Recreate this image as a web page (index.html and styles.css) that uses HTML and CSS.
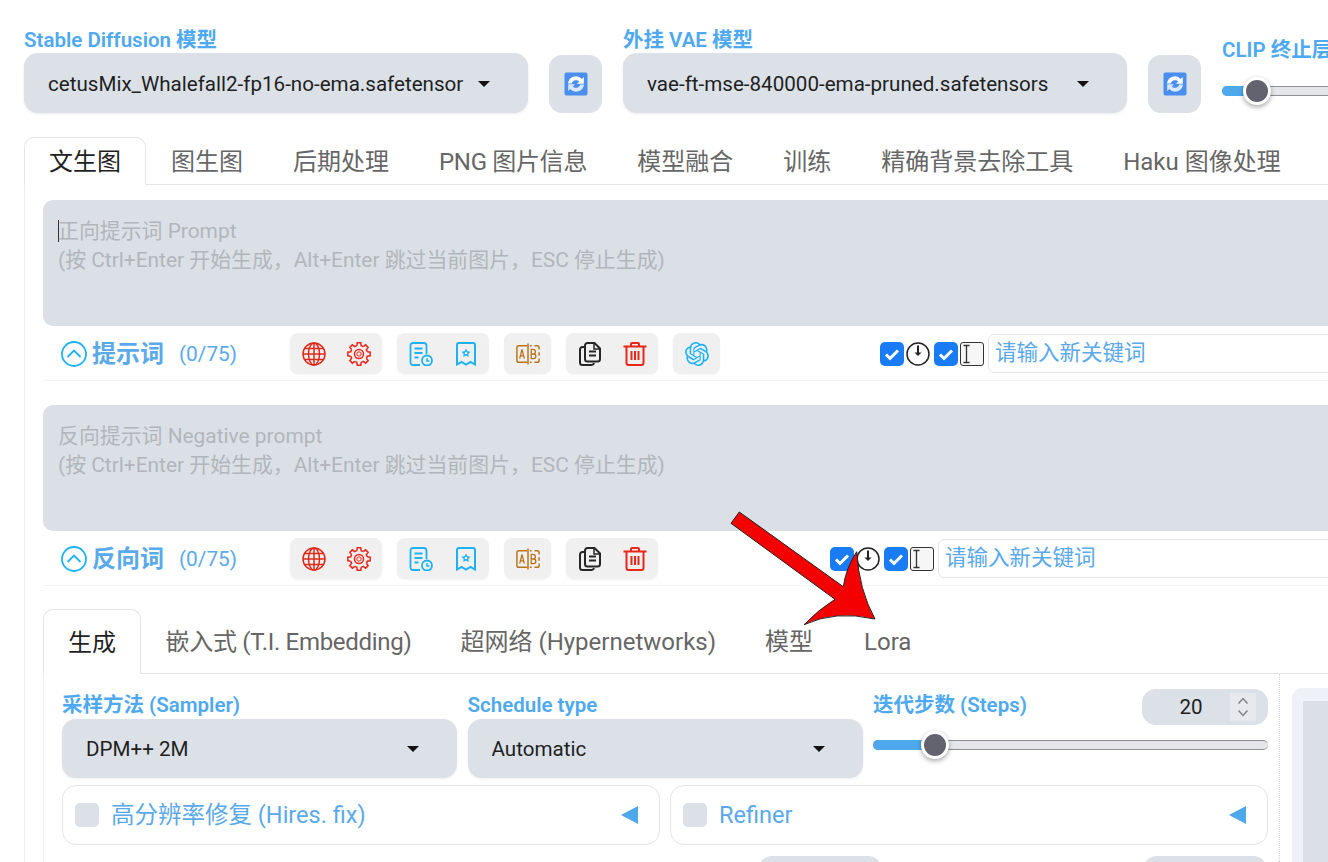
FILE: index.html
```html
<!DOCTYPE html>
<html lang="zh-CN">
<head>
  <meta charset="UTF-8">
  <title>Stable Diffusion</title>
  <link rel="stylesheet" href="styles.css">
</head>
<body>

  <svg class="sprite">
    <symbol id="i-refresh" viewBox="0 0 24 24">
      <rect x="0.500" y="0.500" width="23" height="23" rx="2" fill="#4a8ff0"/>
      <path d="M4 11.500a8 8 0 0 1 13.800-4.600l2-2v6.800H13l2.300-2.300a4.600 4.600 0 0 0-7.600 2.100z" fill="#fff"/>
      <path d="M20 12.500a8 8 0 0 1-13.800 4.600l-2 2v-6.800H11l-2.300 2.300a4.600 4.600 0 0 0 7.600-2.100z" fill="#dbe8fb"/>
    </symbol>
    <symbol id="i-globe" viewBox="0 0 24 24" fill="none" stroke="#dd2a1b" stroke-width="1.500">
      <circle cx="12" cy="12" r="11"/>
      <ellipse cx="12" cy="12" rx="5.500" ry="11"/>
      <path d="M12 1v22M1 12h22M2.800 6.500h18.400M2.800 17.500h18.400"/>
    </symbol>
    <symbol id="i-gear" viewBox="-12 -12 24 24" fill="none" stroke="#e8261a" stroke-width="1.500">
      <path id="tooth" d="M-2.200 -8.200L-1.770 -11.160H1.770L2.200 -8.200A8.500 8.500 0 0 1 4.250 -7.360"/>
      <use href="#tooth" transform="rotate(45)"/>
      <use href="#tooth" transform="rotate(90)"/>
      <use href="#tooth" transform="rotate(135)"/>
      <use href="#tooth" transform="rotate(180)"/>
      <use href="#tooth" transform="rotate(225)"/>
      <use href="#tooth" transform="rotate(270)"/>
      <use href="#tooth" transform="rotate(315)"/>
      <circle r="4.500"/>
      <circle r="2.200" stroke-width="1"/>
    </symbol>
    <symbol id="i-history" viewBox="0 0 24 24" fill="none" stroke="#1cb2f5" stroke-width="1.800">
      <path d="M11 23H4a2.500 2.500 0 0 1-2.500-2.500V3.500A2.500 2.500 0 0 1 4 1h11a2.500 2.500 0 0 1 2.500 2.500V12"/>
      <path d="M5.500 6.500h8M5.500 11h8M5.500 15.500h4" stroke-width="2"/>
      <circle cx="18" cy="18.500" r="5"/>
      <path d="M18 16v3h2.500" stroke-width="1.500"/>
    </symbol>
    <symbol id="i-bookmark" viewBox="0 0 24 24" fill="none" stroke="#1cb2f5" stroke-width="2">
      <path d="M3 3a2 2 0 0 1 2-2h14a2 2 0 0 1 2 2v19.500l-4.500-2.500-4.500 2.500-4.500-2.500L3 22.500z"/>
      <path d="M12 6.500l1.500 2.800 3 .5-2.200 2.200.5 3-2.800-1.400-2.800 1.400.5-3-2.200-2.200 3-.5z" fill="#1cb2f5" stroke="none"/>
      <circle cx="12" cy="11" r="1.300" fill="#f0f0f0" stroke="none"/>
    </symbol>
    <symbol id="i-ab" viewBox="0 0 26 24" fill="none" stroke="#b8741a" stroke-width="1.600">
      <path d="M12 3H3a2 2 0 0 0-2 2v14a2 2 0 0 0 2 2h9M13 0.500v23"/>
      <path d="M15 3h2M20 3h3a2 2 0 0 1 2 2v2M25 10v4M25 17v2a2 2 0 0 1-2 2h-3M17 21h-2"/>
      <path d="M4 17l2.500-10 2.500 10M5 14h3" stroke-width="1.400"/>
      <path d="M16.500 7v10h2.500a2.500 2.500 0 0 0 0-5h-2.500h2a2.500 2.500 0 0 0 0-5z" stroke-width="1.400"/>
    </symbol>
    <symbol id="i-copy" viewBox="0 0 24 24" fill="none" stroke="#262626" stroke-width="2">
      <path d="M7 5H4.500A2.500 2.500 0 0 0 2 7.500v13A2.500 2.500 0 0 0 4.500 23h9a2.500 2.500 0 0 0 2.500-2"/>
      <path d="M9.500 1h7L22 6.500V17a2.500 2.500 0 0 1-2.500 2.500h-10A2.500 2.500 0 0 1 7 17V3.500A2.500 2.500 0 0 1 9.500 1z"/>
      <path d="M11 9.500h7M11 13.500h7"/>
      <path d="M16 1v6h6" stroke-width="1.500"/>
    </symbol>
    <symbol id="i-trash" viewBox="0 0 24 24" fill="none" stroke="#e8261a" stroke-width="2">
      <path d="M0.500 4.500h23M8 4.500V2a1 1 0 0 1 1-1h6a1 1 0 0 1 1 1v2.500"/>
      <path d="M3.500 4.500V21a2 2 0 0 0 2 2h13a2 2 0 0 0 2-2V4.500"/>
      <path d="M8.500 9v9M12 9v9M15.500 9v9"/>
    </symbol>
    <symbol id="i-openai" viewBox="0 0 24 24">
      <path fill="#1cb2f5" d="M22.2819 9.8211a5.9847 5.9847 0 0 0-.5157-4.9108 6.0462 6.0462 0 0 0-6.5098-2.9A6.0651 6.0651 0 0 0 4.9807 4.1818a5.9847 5.9847 0 0 0-3.9977 2.9 6.0462 6.0462 0 0 0 .7427 7.0966 5.98 5.98 0 0 0 .511 4.9107 6.051 6.051 0 0 0 6.5146 2.9001A5.9847 5.9847 0 0 0 13.2599 24a6.0557 6.0557 0 0 0 5.7718-4.2058 5.9894 5.9894 0 0 0 3.9977-2.9001 6.0557 6.0557 0 0 0-.7475-7.0729zm-9.022 12.6081a4.4755 4.4755 0 0 1-2.8764-1.0408l.1419-.0804 4.7783-2.7582a.7948.7948 0 0 0 .3927-.6813v-6.7369l2.02 1.1686a.071.071 0 0 1 .038.052v5.5826a4.504 4.504 0 0 1-4.4945 4.4944zm-9.6607-4.1254a4.4708 4.4708 0 0 1-.5346-3.0137l.142.0852 4.783 2.7582a.7712.7712 0 0 0 .7806 0l5.8428-3.3685v2.3324a.0804.0804 0 0 1-.0332.0615L9.74 19.9502a4.4992 4.4992 0 0 1-6.1408-1.6464zM2.3408 7.8956a4.485 4.485 0 0 1 2.3655-1.9728V11.6a.7664.7664 0 0 0 .3879.6765l5.8144 3.3543-2.0201 1.1685a.0757.0757 0 0 1-.071 0l-4.8303-2.7865A4.504 4.504 0 0 1 2.3408 7.872zm16.5963 3.8558L13.1038 8.364 15.1192 7.2a.0757.0757 0 0 1 .071 0l4.8303 2.7913a4.4944 4.4944 0 0 1-.6765 8.1042v-5.6772a.79.79 0 0 0-.407-.667zm2.0107-3.0231l-.142-.0852-4.7735-2.7818a.7759.7759 0 0 0-.7854 0L9.409 9.2297V6.8974a.0662.0662 0 0 1 .0284-.0615l4.8303-2.7866a4.4992 4.4992 0 0 1 6.6802 4.66zM8.3065 12.863l-2.02-1.1638a.0804.0804 0 0 1-.038-.0567V6.0742a4.4992 4.4992 0 0 1 7.3757-3.4537l-.142.0805L8.704 5.459a.7948.7948 0 0 0-.3927.6813zm1.0976-2.3654l2.602-1.4998 2.6069 1.4998v2.9994l-2.5974 1.4997-2.6067-1.4997Z"/>
    </symbol>
    <symbol id="i-check" viewBox="0 0 24 24">
      <rect width="24" height="24" rx="5" fill="#1a7cf5"/>
      <path d="M6 12.500l4 4 8-8" fill="none" stroke="#fff" stroke-width="3"/>
    </symbol>
    <symbol id="i-clock" viewBox="0 0 24 24" fill="none" stroke="#222" stroke-width="1.500">
      <circle cx="12" cy="12" r="11"/>
      <path d="M12 3.500v9.500" stroke-width="2"/>
      <path d="M8.500 10.500l3.500 3.500 3.500-3.500z" fill="#222" stroke="none"/>
    </symbol>
    <symbol id="i-ibeam" viewBox="0 0 24 24">
      <rect x="0.500" y="0.500" width="23" height="23" rx="2.500" fill="#f6f6f6" stroke="#333"/>
      <path d="M3.500 3.500h6M6.500 3.500v17M3.500 20.500h6" fill="none" stroke="#333" stroke-width="1.300"/>
    </symbol>
  </svg>

  <div class="page">

    <div class="model-row">
      <div class="model-col">
        <label class="field-label">Stable Diffusion 模型</label>
        <div class="select select-model">
          <span class="select-text">cetusMix_Whalefall2-fp16-no-ema.safetensors</span>
          <span class="caret"></span>
        </div>
      </div>
      <button class="refresh-btn"><svg class="icon-refresh"><use href="#i-refresh"/></svg></button>
      <div class="model-col">
        <label class="field-label">外挂 VAE 模型</label>
        <div class="select select-model">
          <span class="select-text">vae-ft-mse-840000-ema-pruned.safetensors</span>
          <span class="caret"></span>
        </div>
      </div>
      <button class="refresh-btn"><svg class="icon-refresh"><use href="#i-refresh"/></svg></button>
      <div class="clip-col">
        <label class="field-label clip-label">CLIP 终止层数</label>
        <div class="slider clip-slider">
          <div class="slider-fill clip-fill"></div>
          <div class="slider-thumb clip-thumb"></div>
        </div>
      </div>
    </div>

    <div class="tabs main-tabs">
      <div class="tab active">文生图</div>
      <div class="tab">图生图</div>
      <div class="tab">后期处理</div>
      <div class="tab tab-tight">PNG 图片信息</div>
      <div class="tab">模型融合</div>
      <div class="tab">训练</div>
      <div class="tab">精确背景去除工具</div>
      <div class="tab">Haku 图像处理</div>
    </div>

    <div class="main-panel">

      <div class="prompt-box"><span class="text-cursor"></span>正向提示词 Prompt<br>(按 Ctrl+Enter 开始生成，Alt+Enter 跳过当前图片，ESC 停止生成)</div>
      <div class="toolbar">
        <svg class="chevron" viewBox="0 0 26 26"><circle cx="13" cy="13" r="12"/><path d="M6.500 16l6.500-6.500 6.500 6.500"/></svg>
        <span class="toolbar-title">提示词</span>
        <span class="token-count">(0/75)</span>
        <div class="tool-group"><svg class="tool-icon"><use href="#i-globe"/></svg><svg class="tool-icon"><use href="#i-gear"/></svg></div>
        <div class="tool-group"><svg class="tool-icon"><use href="#i-history"/></svg><svg class="tool-icon"><use href="#i-bookmark"/></svg></div>
        <div class="tool-group"><svg class="tool-icon"><use href="#i-ab"/></svg></div>
        <div class="tool-group"><svg class="tool-icon"><use href="#i-copy"/></svg><svg class="tool-icon"><use href="#i-trash"/></svg></div>
        <div class="tool-group"><svg class="tool-icon"><use href="#i-openai"/></svg></div>
        <div class="keyword keyword-pos">
          <svg class="kw-icon"><use href="#i-check"/></svg>
          <svg class="kw-icon"><use href="#i-clock"/></svg>
          <svg class="kw-icon kw-gap"><use href="#i-check"/></svg>
          <svg class="kw-icon"><use href="#i-ibeam"/></svg>
          <div class="kw-input">请输入新关键词</div>
        </div>
      </div>

      <div class="prompt-box prompt-neg">反向提示词 Negative prompt<br>(按 Ctrl+Enter 开始生成，Alt+Enter 跳过当前图片，ESC 停止生成)</div>
      <div class="toolbar">
        <svg class="chevron" viewBox="0 0 26 26"><circle cx="13" cy="13" r="12"/><path d="M6.500 16l6.500-6.500 6.500 6.500"/></svg>
        <span class="toolbar-title">反向词</span>
        <span class="token-count">(0/75)</span>
        <div class="tool-group"><svg class="tool-icon"><use href="#i-globe"/></svg><svg class="tool-icon"><use href="#i-gear"/></svg></div>
        <div class="tool-group"><svg class="tool-icon"><use href="#i-history"/></svg><svg class="tool-icon"><use href="#i-bookmark"/></svg></div>
        <div class="tool-group"><svg class="tool-icon"><use href="#i-ab"/></svg></div>
        <div class="tool-group"><svg class="tool-icon"><use href="#i-copy"/></svg><svg class="tool-icon"><use href="#i-trash"/></svg></div>
        <div class="keyword keyword-neg">
          <svg class="kw-icon"><use href="#i-check"/></svg>
          <svg class="kw-icon"><use href="#i-clock"/></svg>
          <svg class="kw-icon kw-gap"><use href="#i-check"/></svg>
          <svg class="kw-icon"><use href="#i-ibeam"/></svg>
          <div class="kw-input">请输入新关键词</div>
        </div>
      </div>

      <div class="tabs sub-tabs">
        <div class="tab active">生成</div>
        <div class="tab tab-tight">嵌入式 (T.I. Embedding)</div>
        <div class="tab">超网络 (Hypernetworks)</div>
        <div class="tab">模型</div>
        <div class="tab">Lora</div>
      </div>

      <div class="sub-panel">
        <div class="settings">
          <div class="settings-row">
            <div class="setting">
              <label class="field-label setting-label">采样方法 (Sampler)</label>
              <div class="select select-small"><span class="select-text">DPM++ 2M</span><span class="caret"></span></div>
            </div>
            <div class="setting">
              <label class="field-label setting-label">Schedule type</label>
              <div class="select select-small"><span class="select-text">Automatic</span><span class="caret"></span></div>
            </div>
            <div class="setting">
              <div class="steps-head">
                <label class="field-label steps-label">迭代步数 (Steps)</label>
                <div class="number-box">
                  <span class="number-value">20</span>
                  <span class="spinner">
                    <svg viewBox="0 0 12 8"><path d="M1.500 6.500L6 1.500l4.500 5"/></svg>
                    <svg viewBox="0 0 12 8"><path d="M1.500 1.500L6 6.500l4.500-5"/></svg>
                  </span>
                </div>
              </div>
              <div class="slider steps-slider">
                <div class="slider-fill steps-fill"></div>
                <div class="slider-thumb steps-thumb"></div>
              </div>
            </div>
          </div>

          <div class="accordion-row">
            <div class="accordion">
              <span class="box"></span>
              <span class="accordion-title">高分辨率修复 (Hires. fix)</span>
              <span class="fold-arrow"></span>
            </div>
            <div class="accordion">
              <span class="box"></span>
              <span class="accordion-title">Refiner</span>
              <span class="fold-arrow"></span>
            </div>
          </div>

          <div class="size-row">
            <label class="field-label size-label">宽度</label>
            <div class="number-box size-box"></div>
            <label class="field-label size-label-right">总批次数</label>
            <div class="number-box size-box"></div>
          </div>
        </div>

        <div class="preview"><div class="preview-inner"></div></div>
      </div>
    </div>
  </div>

  <!-- the red annotation arrow drawn over the screenshot -->
  <svg class="annotation" viewBox="0 0 1328 862">
    <path d="M739.300 512L843.300 586.700Q846 568 856.700 551.700Q859 590 875 619Q835 610 804 624.700Q818 610 835 599.300L731 523.300Z" fill="#f50000" stroke="#222" stroke-width="1"/>
  </svg>

</body>
</html>
```

FILE: styles.css
```css
* {
  box-sizing: border-box;
}

html, body {
  margin: 0;
  height: 862px;
  overflow: hidden;
  background: #fff;
}

body {
  position: relative;
  font-family: Roboto, "Noto Sans CJK SC", sans-serif;
  color: #1f1f1f;
}

.sprite {
  display: none;
}

.page {
  width: 1700px;
  padding: 27px 0 0 24px;
}

/* top row with the model pickers */
.model-row {
  display: flex;
  align-items: flex-start;
}

.model-col {
  width: 504px;
}

.field-label {
  display: block;
  color: #4ea9f0;
  font-size: 20.500px;
  font-weight: 600;
  line-height: 26px;
  white-space: nowrap;
}

.select {
  display: flex;
  align-items: center;
  background: #dbe1e7;
  border-radius: 14px;
  box-shadow: 0 1px 3px rgba(0, 0, 0, 0.08);
  font-size: 20.600px;
  line-height: 28px;
}

.select-model {
  height: 60px;
  padding: 1px 38px 0 24px;
}

.select-small {
  height: 59px;
  padding: 0 38px 0 24px;
}

.select-text {
  flex: 1;
  overflow: hidden;
  white-space: nowrap;
}

.caret {
  flex: none;
  margin-left: 14px;
  border-top: 6px solid #111;
  border-left: 6.500px solid transparent;
  border-right: 6.500px solid transparent;
}

.refresh-btn {
  display: flex;
  align-items: center;
  justify-content: center;
  width: 53px;
  height: 58px;
  margin: 28px 21px 0;
  padding: 0;
  border: 0;
  border-radius: 13px;
  background: #dbe1e7;
}

.icon-refresh {
  width: 24px;
  height: 24px;
}

.clip-col {
  width: 300px;
}

.clip-label {
  margin-top: 10px;
}

/* sliders */
.slider {
  position: relative;
  height: 10px;
  border: 1px solid #8d8f96;
  border-width: 1px 0;
  border-radius: 5px;
  background: #e5e6ea;
}

.slider-fill {
  position: absolute;
  top: -1px;
  left: 0;
  height: 10px;
  background: #4ea9ec;
  border-radius: 5px 0 0 5px;
}

.slider-thumb {
  position: absolute;
  top: -10px;
  width: 28px;
  height: 28px;
  border: 3px solid #fff;
  border-radius: 50%;
  background: #62636f;
  box-shadow: 0 2px 5px rgba(0, 0, 0, 0.35);
}

.clip-slider {
  margin-top: 23px;
}

.clip-fill {
  width: 30px;
}

.clip-thumb {
  left: 21px;
}

.steps-slider {
  margin-top: 15px;
}

.steps-fill {
  width: 56px;
}

.steps-thumb {
  left: 48px;
}

/* tabs */
.tabs {
  display: flex;
  border-bottom: 1px solid #e3e5e8;
}

.main-tabs {
  height: 48px;
  margin-top: 24px;
}

.sub-tabs {
  height: 65px;
  margin-top: 23px;
  align-items: stretch;
}

.tab {
  display: flex;
  align-items: center;
  height: 100%;
  padding: 2px 25px 0;
  color: #666;
  font-size: 24px;
  line-height: 34px;
  white-space: nowrap;
}

.sub-tabs .tab {
  padding-left: 24.500px;
  padding-right: 24.500px;
}

.sub-tabs .tab:last-child {
  padding-left: 26.500px;
}

.tab-tight {
  letter-spacing: -0.300px;
}

.tab.active {
  height: calc(100% + 1px);
  border: 1px solid #e3e5e8;
  border-bottom: 0;
  border-radius: 10px 10px 0 0;
  background: #fff;
  color: #1f1f1f;
  padding: 1px 24px 0;
}

.main-panel {
  border-left: 1px solid #eceef0;
  padding: 15px 0 0 18px;
}

/* prompt boxes */
.prompt-box {
  height: 126px;
  padding: 17px 15px;
  background: #dae0e6;
  border-radius: 10px 0 0 10px;
  color: #b2b6bc;
  font-size: 20.900px;
  line-height: 29px;
  white-space: nowrap;
}

.text-cursor {
  display: inline-block;
  width: 1px;
  height: 22px;
  margin-right: -1px;
  background: #333;
  vertical-align: -4px;
}

.prompt-neg {
  margin-top: 24px;
}

.toolbar {
  display: flex;
  align-items: flex-start;
  height: 55px;
  padding: 7px 0 0 18px;
  border-bottom: 1px solid #f2f3f5;
}

.chevron {
  flex: none;
  width: 26px;
  height: 26px;
  margin-top: 8px;
  fill: none;
  stroke: #1cb2f5;
  stroke-width: 1.800;
}

.toolbar-title {
  flex: none;
  width: 71px;
  margin-left: 5px;
  color: #5aa9ea;
  font-size: 24px;
  font-weight: 700;
  line-height: 43px;
  white-space: nowrap;
}

.token-count {
  flex: none;
  width: 111px;
  margin-left: 16px;
  color: #5aa9ea;
  font-size: 20.800px;
  line-height: 43px;
}

.tool-group {
  display: flex;
  align-items: center;
  gap: 21px;
  height: 41px;
  margin-right: 15px;
  padding: 0 11.500px;
  background: #f0f0f0;
  border-radius: 8px;
  box-shadow: 0 1px 2px rgba(0, 0, 0, 0.05);
}

.tool-icon {
  flex: none;
  width: 24px;
  height: 24px;
}

.keyword {
  display: flex;
  align-items: center;
  height: 41px;
}

.keyword-pos {
  margin-left: 145px;
}

.keyword-neg {
  margin-left: 157px;
}

.kw-icon {
  flex: none;
  width: 24px;
  height: 24px;
  margin-right: 2px;
}

.kw-icon.kw-gap {
  margin-left: 2px;
}

.kw-input {
  width: 500px;
  height: 39px;
  margin-left: 2px;
  padding-left: 6px;
  border: 1px solid #e3e6ea;
  border-radius: 6px;
  color: #5aa9ea;
  font-size: 21.500px;
  line-height: 35px;
}

/* lower panel */
.sub-panel {
  display: flex;
  align-items: flex-start;
  height: 300px;
  padding-left: 18px;
  border-left: 1px solid #eceef0;
}

.settings {
  flex: none;
  width: 1218px;
  height: 100%;
  padding: 15px 12px 0 0;
  border-right: 1px dotted #d5d8dc;
}

.settings-row {
  display: grid;
  grid-template-columns: 395px 395px 395px;
  column-gap: 10.500px;
}

.setting-label {
  line-height: 30px;
  padding-top: 1px;
  height: 30px;
}

.steps-head {
  display: flex;
  justify-content: space-between;
  align-items: center;
  height: 36px;
}

.steps-label {
  padding-bottom: 4px;
}

.number-box {
  display: flex;
  align-items: center;
  width: 126px;
  height: 36px;
  background: #dbe1e7;
  border-radius: 14px;
}

.number-value {
  width: 88px;
  padding-left: 10px;
  text-align: center;
  font-size: 20.600px;
}

.spinner {
  display: flex;
  flex-direction: column;
  justify-content: center;
  align-items: center;
  gap: 4px;
  width: 26px;
  height: 28px;
  background: #e8e9ee;
}

.spinner svg {
  width: 12px;
  height: 8px;
  fill: none;
  stroke: #80828a;
  stroke-width: 1.500;
}

.accordion-row {
  display: grid;
  grid-template-columns: 598px 598px;
  column-gap: 10px;
  margin-top: 7px;
}

.accordion {
  display: flex;
  align-items: center;
  height: 60px;
  padding: 0 21px 0 12px;
  border: 1px solid #e3e5e8;
  border-radius: 14px;
}

.box {
  flex: none;
  width: 24px;
  height: 24px;
  background: #dbe1e7;
  border-radius: 5px;
}

.accordion-title {
  flex: 1;
  margin-left: 12px;
  color: #5aa9ea;
  font-size: 23.500px;
  line-height: 30px;
  white-space: nowrap;
}

.fold-arrow {
  border-top: 9px solid transparent;
  border-bottom: 9px solid transparent;
  border-right: 17px solid #4ea9ec;
}

.size-row {
  display: flex;
  align-items: flex-start;
  margin-top: 11px;
}

.size-label {
  width: 697px;
  margin-top: 4px;
}

.size-label-right {
  margin: 4px 0 0 103px;
  width: 158px;
}

.size-box {
  width: 124px;
}

.preview {
  flex: none;
  width: 200px;
  height: 100%;
  margin: 14px 0 0 12px;
  padding: 13px 0 0 11px;
  background: #eef2f8;
  border-radius: 10px 0 0 0;
}

.preview-inner {
  height: 100%;
  background: #dae0e6;
}

/* sits over everything, like the marker drawn on the original */
.annotation {
  position: absolute;
  top: 0;
  left: 0;
  width: 1328px;
  height: 862px;
  pointer-events: none;
}
```
